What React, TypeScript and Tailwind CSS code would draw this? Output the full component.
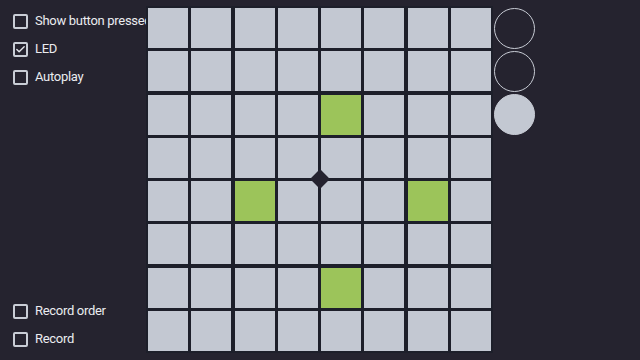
import { Check } from 'lucide-react'

const green = new Set(['2-4', '4-2', '4-6', '6-4'])
const circles = [false, false, true]

function Option({ label, checked = false }: { label: string; checked?: boolean }) {
  return (
    <div className="flex h-[28px] items-center gap-[7px] whitespace-nowrap pl-[13px]">
      <span className="flex h-[15px] w-[15px] shrink-0 items-center justify-center rounded-[2px] border-2 border-[#c9cdd6]">
        {checked ? <Check className="h-[13px] w-[13px] text-[#e4e6ec]" strokeWidth={3} /> : null}
      </span>
      <span className="text-[13px] tracking-[-0.3px] text-[#ebecf0]">{label}</span>
    </div>
  )
}

export default function App() {
  return (
    <div
      className="flex h-[360px] w-[640px] overflow-hidden bg-[#25232f]"
      style={{ fontFamily: 'Roboto, "Noto Sans", sans-serif' }}
    >
      <div className="flex w-[146px] shrink-0 flex-col justify-between py-[7px]">
        <div className="flex flex-col">
          <Option label="Show button pressed" />
          <Option label="LED" checked />
          <Option label="Autoplay" />
        </div>
        <div className="flex flex-col">
          <Option label="Record order" />
          <Option label="Record" />
        </div>
      </div>

      <div className="relative z-10 mt-[6px] h-[347px] w-[347px] shrink-0 bg-[#1d1f2a] p-[2px]">
        <div className="grid grid-cols-8 gap-[3.3px]">
          {Array.from({ length: 64 }, (_, i) => {
            const key = `${Math.floor(i / 8)}-${i % 8}`
            return (
              <div
                key={key}
                className={`h-[40px] w-[40px] ${green.has(key) ? 'bg-[#9cc45a]' : 'bg-[#c3c8d2]'}`}
              />
            )
          })}
        </div>
        <div className="absolute left-[167px] top-[166px] h-[14px] w-[14px] rotate-45 bg-[#25232f]" />
      </div>

      <div className="ml-[1px] mt-[7.5px] flex flex-col gap-[2.3px]">
        {circles.map((filled, i) => (
          <div
            key={i}
            className={`h-[41px] w-[41px] rounded-full border-[1.5px] border-[#c8ccd5] ${filled ? 'bg-[#c3c8d2]' : ''}`}
          />
        ))}
      </div>
    </div>
  )
}
